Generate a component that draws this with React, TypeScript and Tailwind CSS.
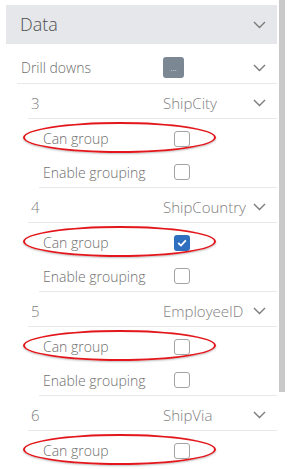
import React from "react";

const font = { fontFamily: '"Open Sans", "Noto Sans", sans-serif' };

type Group = { n: number; field: string; checked: boolean };

const groups: Group[] = [
  { n: 3, field: "ShipCity", checked: false },
  { n: 4, field: "ShipCountry", checked: true },
  { n: 5, field: "EmployeeID", checked: false },
  { n: 6, field: "ShipVia", checked: false },
];

function Chevron() {
  return (
    <svg width="13" height="8" viewBox="0 0 13 8" className="shrink-0">
      <polyline points="1,1 6.5,6.5 12,1" fill="none" stroke="#7b7b7b" strokeWidth="1.4" />
    </svg>
  );
}

function Checkbox({ checked }: { checked: boolean }) {
  if (checked) {
    return (
      <div className="w-[16px] h-[16px] rounded-[3px] bg-[#2f6fc0] flex items-center justify-center">
        <svg width="10" height="8" viewBox="0 0 10 8">
          <polyline points="1.2,4 4,6.6 8.8,1.4" fill="none" stroke="#fff" strokeWidth="1.8" />
        </svg>
      </div>
    );
  }
  return <div className="w-[16px] h-[16px] rounded-[3px] border border-[#a3a3a3] bg-white" />;
}

function Ring() {
  // red annotation ellipse drawn over the row
  return (
    <div className="absolute left-[-16px] top-[3px] w-[193px] h-[31px] rounded-[50%] border-2 border-[#e3161b] shadow-[0_1px_2px_rgba(0,0,0,0.25)] pointer-events-none" />
  );
}

function GroupBlock({ g }: { g: Group }) {
  return (
    <div className="ml-[11px]">
      <div className="h-[35px] pt-[4px] flex items-center border-b border-[#e6e8eb] text-[15px] font-light text-[#808080]">
        <div className="w-[135px] pl-[3px]">{g.n}</div>
        <div className="flex-1 whitespace-nowrap">{g.field}</div>
        <div className="pr-[11px] flex items-center">
          <Chevron />
        </div>
      </div>
      <div className="relative ml-[11px] h-[35px] pt-[4px] flex items-center text-[14px] font-light text-[#6e6e6e]">
        <Ring />
        <div className="w-[135px] pl-[4px]">Can group</div>
        <Checkbox checked={g.checked} />
      </div>
      <div className="ml-[11px] h-[34px] pt-[3px] flex items-center border-b border-[#e6e8eb] text-[14px] font-light text-[#6e6e6e]">
        <div className="w-[135px] pl-[4px]">Enable grouping</div>
        <Checkbox checked={false} />
      </div>
    </div>
  );
}

export default function App() {
  return (
    <div className="w-[296px] h-[469px] overflow-hidden bg-white flex" style={font}>
      <div className="w-[277px] shrink-0">
        <div className="ml-[6px] mt-[5px] h-[39px] bg-[#e5e7ea] flex items-center justify-between pl-[14px] pr-[11px]">
          <span className="text-[18px] font-light text-[#4f4f4f]">Data</span>
          <Chevron />
        </div>
        <div className="ml-[17px] mt-[8px] h-[32px] flex items-center border-b border-[#e6e8eb] text-[14px] font-light text-[#6e6e6e]">
          <div className="w-[146px] pl-[4px]">Drill downs</div>
          <div className="flex-1">
            <div className="w-[21px] h-[21px] rounded-[3px] bg-[#7b8793] text-white text-[9px] leading-none flex items-end justify-center pb-[6px]">
              ...
            </div>
          </div>
          <div className="pr-[11px] flex items-center">
            <Chevron />
          </div>
        </div>
        <div className="ml-[17px]">
          {groups.map((g) => (
            <GroupBlock key={g.n} g={g} />
          ))}
        </div>
      </div>
      <div className="ml-[2px] w-[6px] h-[392px] bg-[#c9c9c9]" />
    </div>
  );
}
